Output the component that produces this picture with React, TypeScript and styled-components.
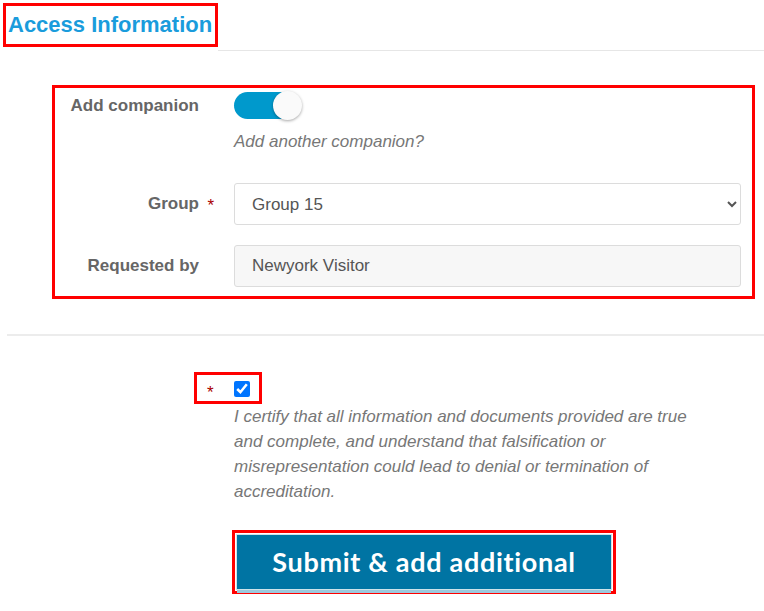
import styled, { createGlobalStyle } from "styled-components"

const GlobalStyle = createGlobalStyle`
  body {
    margin: 0;
    background: #fff;
    font-family: "Liberation Sans", Arial, sans-serif;
  }
`

const Page = styled.div`
  width: 764px;
  padding-top: 3px;
`

const Header = styled.div`
  display: flex;
  align-items: flex-end;
  padding-left: 3px;
`

const Title = styled.h2`
  margin: 0 0 4px;
  padding: 0 0 0 2px;
  border: 3px solid #f00;
  color: #1a9cdc;
  font-size: 22px;
  font-weight: bold;
  line-height: 38px;
  height: 44px;
  width: 215px;
  box-sizing: border-box;
  white-space: nowrap;
`

const Rule = styled.div`
  flex: 1;
  height: 1px;
  background: #e6e6e6;
`

const Divider = styled.div`
  height: 2px;
  background: #ececec;
  margin: 35px 0 0 7px;
`

const FormBox = styled.div`
  margin: 34px 0 0 52px;
  width: 703px;
  box-sizing: border-box;
  border: 3px solid #f00;
  padding: 4px 11px 9px 0;
  display: grid;
  grid-template-columns: 144px 507px;
  column-gap: 35px;
  row-gap: 20px;
`

const Label = styled.div<{ $compact?: boolean }>`
  position: relative;
  text-align: right;
  color: #666;
  font-size: 17px;
  font-weight: bold;
  line-height: ${p => (p.$compact ? 27 : 42)}px;
  white-space: nowrap;
`

const Required = styled.span`
  position: absolute;
  right: -15px;
  top: 2px;
  color: #a00;
  font-weight: normal;
`

const ToggleCell = styled.div`
  display: flex;
  flex-direction: column;
  gap: 13px;
  margin-bottom: 11px;
`

const Track = styled.div<{ $on: boolean }>`
  width: 67px;
  height: 27px;
  border-radius: 14px;
  background: ${p => (p.$on ? "#0099cc" : "#ccc")};
  position: relative;
`

const Knob = styled.div`
  position: absolute;
  right: -1px;
  top: -1px;
  width: 29px;
  height: 29px;
  border-radius: 50%;
  background: #fafafa;
  box-shadow: 0 1px 3px rgba(0, 0, 0, 0.35);
`

const Hint = styled.div`
  font-style: italic;
  color: #777;
  font-size: 17px;
  line-height: 20px;
`

const Select = styled.select`
  height: 42px;
  width: 100%;
  border: 1px solid #dcdcdc;
  border-radius: 3px;
  background: #fff;
  color: #555;
  font-family: "Liberation Sans", Arial, sans-serif;
  font-size: 17px;
  padding: 0 10px 0 13px;
`

const Input = styled.input`
  height: 42px;
  width: 100%;
  box-sizing: border-box;
  border: 1px solid #dcdcdc;
  border-radius: 3px;
  background: #f7f7f7;
  color: #555;
  font-family: "Liberation Sans", Arial, sans-serif;
  font-size: 17px;
  padding: 0 17px;
`

const Certify = styled.div`
  margin: 36px 0 0 194px;
`

const CheckBox = styled.div`
  display: flex;
  align-items: center;
  width: 68px;
  height: 32px;
  box-sizing: border-box;
  border: 3px solid #f00;
  padding-left: 10px;

  input {
    margin: 2px 0 0 20px;
    width: 16px;
    height: 16px;
  }
`

const Star = styled.span`
  color: #a00;
  font-size: 17px;
  margin-top: 9px;
`

const Statement = styled.p`
  margin: 0 0 0 40px;
  width: 465px;
  font-style: italic;
  color: #777;
  font-size: 17px;
  line-height: 25px;
`

const ButtonFrame = styled.div`
  display: inline-block;
  margin: 26px 0 0 38px;
  border: 3px solid #f00;
  padding: 1px;
`

const Button = styled.button`
  display: block;
  width: 376px;
  height: 56px;
  border: 1px solid #cfe3ea;
  background: #0074a3;
  color: #fff;
  font-family: Lato, "Open Sans", sans-serif;
  font-weight: 700;
  font-size: 27px;
  letter-spacing: 0.7px;
  padding: 0 0 2px;
  box-shadow: 0 4px 0 -1px #9cc9dc;
`

export default function App() {
  return (
    <Page>
      <GlobalStyle />
      <Header>
        <Title>Access Information</Title>
        <Rule />
      </Header>

      <FormBox>
        <Label $compact>Add companion</Label>
        <ToggleCell>
          <Track $on>
            <Knob />
          </Track>
          <Hint>Add another companion?</Hint>
        </ToggleCell>

        <Label>
          Group<Required>*</Required>
        </Label>
        <Select defaultValue="15">
          <option value="15">Group 15</option>
        </Select>

        <Label>Requested by</Label>
        <Input readOnly value="Newyork Visitor" />
      </FormBox>

      <Divider />

      <Certify>
        <CheckBox>
          <Star>*</Star>
          <input type="checkbox" defaultChecked />
        </CheckBox>
        <Statement>
          I certify that all information and documents provided are true and complete, and
          understand that falsification or misrepresentation could lead to denial or termination
          of accreditation.
        </Statement>
        <ButtonFrame>
          <Button>Submit &amp; add additional</Button>
        </ButtonFrame>
      </Certify>
    </Page>
  )
}
